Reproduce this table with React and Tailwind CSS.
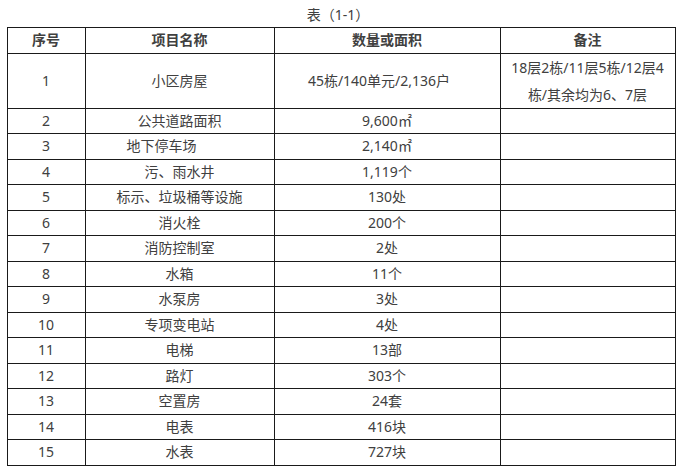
import React from 'react';

const rows = [
  ['2', '公共道路面积', '9,600㎡'],
  ['3', '地下停车场', '2,140㎡', 'shift'],
  ['4', '污、雨水井', '1,119个'],
  ['5', '标示、垃圾桶等设施', '130处'],
  ['6', '消火栓', '200个'],
  ['7', '消防控制室', '2处'],
  ['8', '水箱', '11个'],
  ['9', '水泵房', '3处'],
  ['10', '专项变电站', '4处'],
  ['11', '电梯', '13部'],
  ['12', '路灯', '303个'],
  ['13', '空置房', '24套'],
  ['14', '电表', '416块'],
  ['15', '水表', '727块'],
];

const cell = 'border border-[#1a1a1a] p-0 text-center align-middle';

export default function App() {
  return (
    <div className="h-[470px] w-[676px] bg-white font-['Noto_Sans','Noto_Sans_CJK_SC',sans-serif] text-[14px] text-[#404040]">
      <div className="h-[27px] pt-[4px] text-center leading-[22px]">表（1-1）</div>
      <table className="ml-[6.5px] w-[668px] table-fixed border-collapse leading-[20px]">
        <colgroup>
          <col className="w-[78px]" />
          <col className="w-[189px]" />
          <col className="w-[226px]" />
          <col className="w-[175px]" />
        </colgroup>
        <thead>
          <tr className="h-[25.5px] font-bold">
            <th className={cell}>序号</th>
            <th className={cell}>项目名称</th>
            <th className={cell}>数量或面积</th>
            <th className={cell}>备注</th>
          </tr>
        </thead>
        <tbody>
          <tr className="h-[50.5px]">
            <td className={cell}>1</td>
            <td className={cell}>小区房屋</td>
            <td className={cell}>
              <span className="mr-[16px]">45栋/140单元/2,136户</span>
            </td>
            <td className={`${cell} leading-[27px]`}>
              18层2栋/11层5栋/12层4
              <br />
              栋/其余均为6、7层
            </td>
          </tr>
          {rows.map(([no, name, qty, shift]) => (
            <tr key={no} className="h-[25.5px]">
              <td className={cell}>{no}</td>
              <td className={cell}>
                <span className={shift ? 'mr-[36px]' : ''}>{name}</span>
              </td>
              <td className={cell}>{qty}</td>
              <td className={cell}></td>
            </tr>
          ))}
        </tbody>
      </table>
    </div>
  );
}
